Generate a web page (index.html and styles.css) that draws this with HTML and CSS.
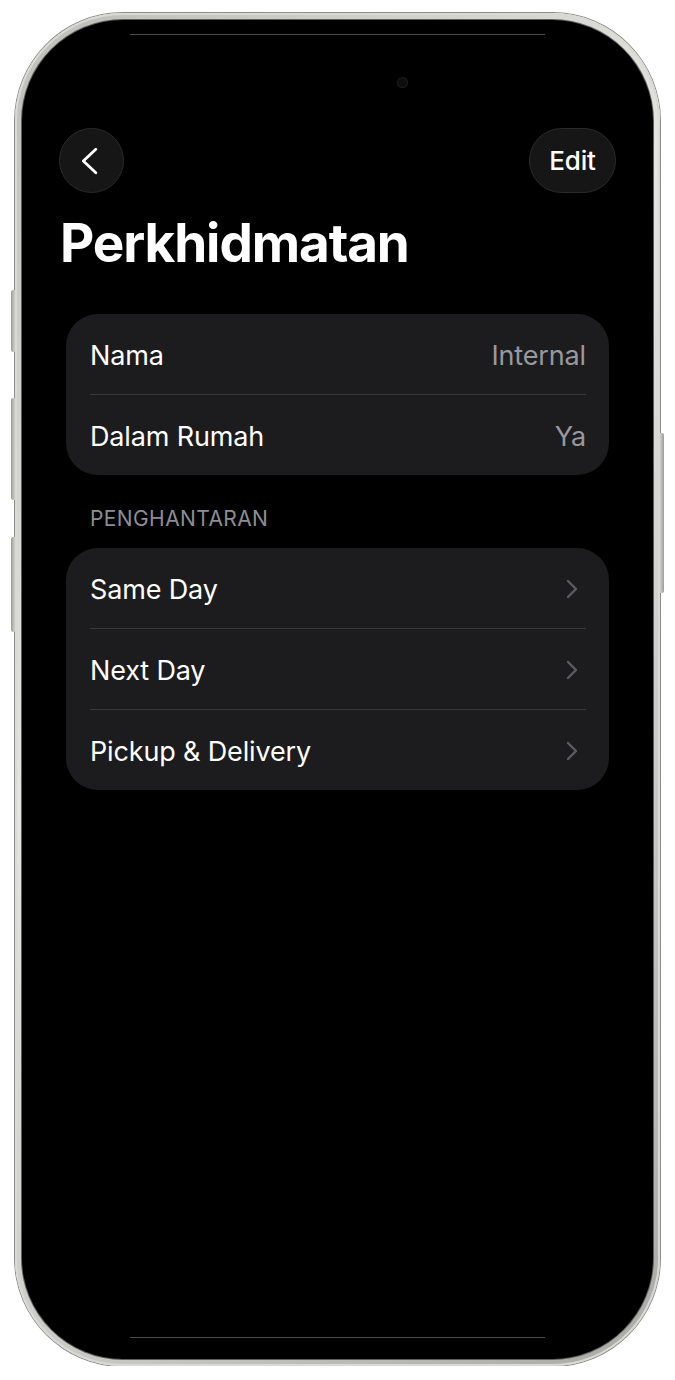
FILE: index.html
```html
<!DOCTYPE html>
<html lang="ms">
<head>
  <meta charset="UTF-8">
  <meta name="viewport" content="width=device-width, initial-scale=1.0">
  <title>Perkhidmatan</title>
  <link rel="stylesheet" href="styles.css">
</head>
<body>
  <div class="page">
    <div class="phone">
      <span class="side-btn btn-action"></span>
      <span class="side-btn btn-vol-up"></span>
      <span class="side-btn btn-vol-down"></span>
      <span class="side-btn btn-power"></span>
      <div class="screen">
        <span class="camera"></span>

        <div class="nav">
          <button class="nav-btn back" aria-label="Kembali">
            <svg viewBox="0 0 24 36"><polyline points="19,4 4,18 19,32"/></svg>
          </button>
          <button class="nav-btn edit">Edit</button>
        </div>

        <h1>Perkhidmatan</h1>

        <div class="card">
          <div class="row"><span class="label">Nama</span><span class="value">Internal</span></div>
          <div class="sep"></div>
          <div class="row"><span class="label">Dalam Rumah</span><span class="value">Ya</span></div>
        </div>

        <div class="section-title">PENGHANTARAN</div>

        <div class="card card-nav">
          <div class="row"><span class="label">Same Day</span>
            <svg class="chev" viewBox="0 0 12 20"><polyline points="2,2 10,10 2,18"/></svg></div>
          <div class="sep"></div>
          <div class="row"><span class="label">Next Day</span>
            <svg class="chev" viewBox="0 0 12 20"><polyline points="2,2 10,10 2,18"/></svg></div>
          <div class="sep"></div>
          <div class="row"><span class="label">Pickup &amp; Delivery</span>
            <svg class="chev" viewBox="0 0 12 20"><polyline points="2,2 10,10 2,18"/></svg></div>
        </div>
      </div>
    </div>
  </div>
</body>
</html>
```

FILE: styles.css
```css
body { margin:0; background:#fff; font-family: Inter, "Noto Sans", Arial, sans-serif; color:#fff; }
.page { padding:13px 0 0 15px; }

.phone { position:relative; width:645px; height:1353px; box-sizing:border-box; padding:7px;
         border-radius:108px;
         background:linear-gradient(135deg, #bdbdb9, #e4e4e0 40%, #c9c9c5 70%, #a9a9a6);
         box-shadow:0 0 0 1px #8c8c89, inset 0 0 0 2px #d9d9d5; }
.side-btn { position:absolute; width:5px; border-radius:2px 0 0 2px;
            background:linear-gradient(90deg, #9c9c99, #deded9); }
.btn-action { left:-4px; top:277px; height:62px; }
.btn-vol-up { left:-4px; top:385px; height:102px; }
.btn-vol-down { left:-4px; top:524px; height:95px; }
.btn-power { right:-4px; top:420px; height:160px; border-radius:0 2px 2px 0;
             background:linear-gradient(90deg, #deded9, #9c9c99); }

.screen { position:relative; height:100%; box-sizing:border-box; background:#000;
          border-radius:101px; padding-top:108px; overflow:hidden;
          box-shadow:0 0 0 1px #5e5e5c; }
.screen::before, .screen::after { content:""; position:absolute; left:108px; right:108px;
          height:1px; background:#4a4a4a; }
.screen::before { top:14px; }
.screen::after { bottom:21px; }
.camera { position:absolute; left:376px; top:58px; width:9px; height:9px; border-radius:50%;
          background:#0d0d0d; box-shadow:0 0 0 1px #1e1e1e; }

.nav { display:flex; justify-content:space-between; padding:0 37px; }
.nav-btn { height:65px; border-radius:33px; background:#161616; border:1px solid #2a2a2a;
           box-sizing:border-box; color:#fff; font-family:inherit; padding:0;
           display:flex; align-items:center; justify-content:center; }
.back { width:65px; }
.back svg { width:20px; height:32px; margin-left:-3px; fill:none; stroke:#fff;
            stroke-width:3.4; stroke-linecap:round; stroke-linejoin:round; }
.edit { width:87px; font-size:26px; font-weight:500; letter-spacing:-0.2px; }

h1 { margin:17px 0 0 38px; font-size:53px; line-height:66px; font-weight:700;
     letter-spacing:-1.1px; }

.card { margin:38px 44px 0; background:#1c1c1e; border-radius:32px; }
.row { height:80px; display:flex; align-items:center; justify-content:space-between;
       padding:2px 23px 0 24px; box-sizing:border-box; font-size:27px; letter-spacing:-0.15px; }
.value { color:#98989e; }
.sep { height:1px; margin:0 23px 0 24px; background:#38383a; }
.chev { width:12px; height:20px; margin-right:8px; fill:none; stroke:#5c5c60;
        stroke-width:2.4; stroke-linecap:round; stroke-linejoin:round; }

.section-title { margin:31px 0 0 68px; font-size:21px; line-height:25px; color:#8d8d93;
                 letter-spacing:0.4px; }
.card-nav { margin-top:17px; }
```
